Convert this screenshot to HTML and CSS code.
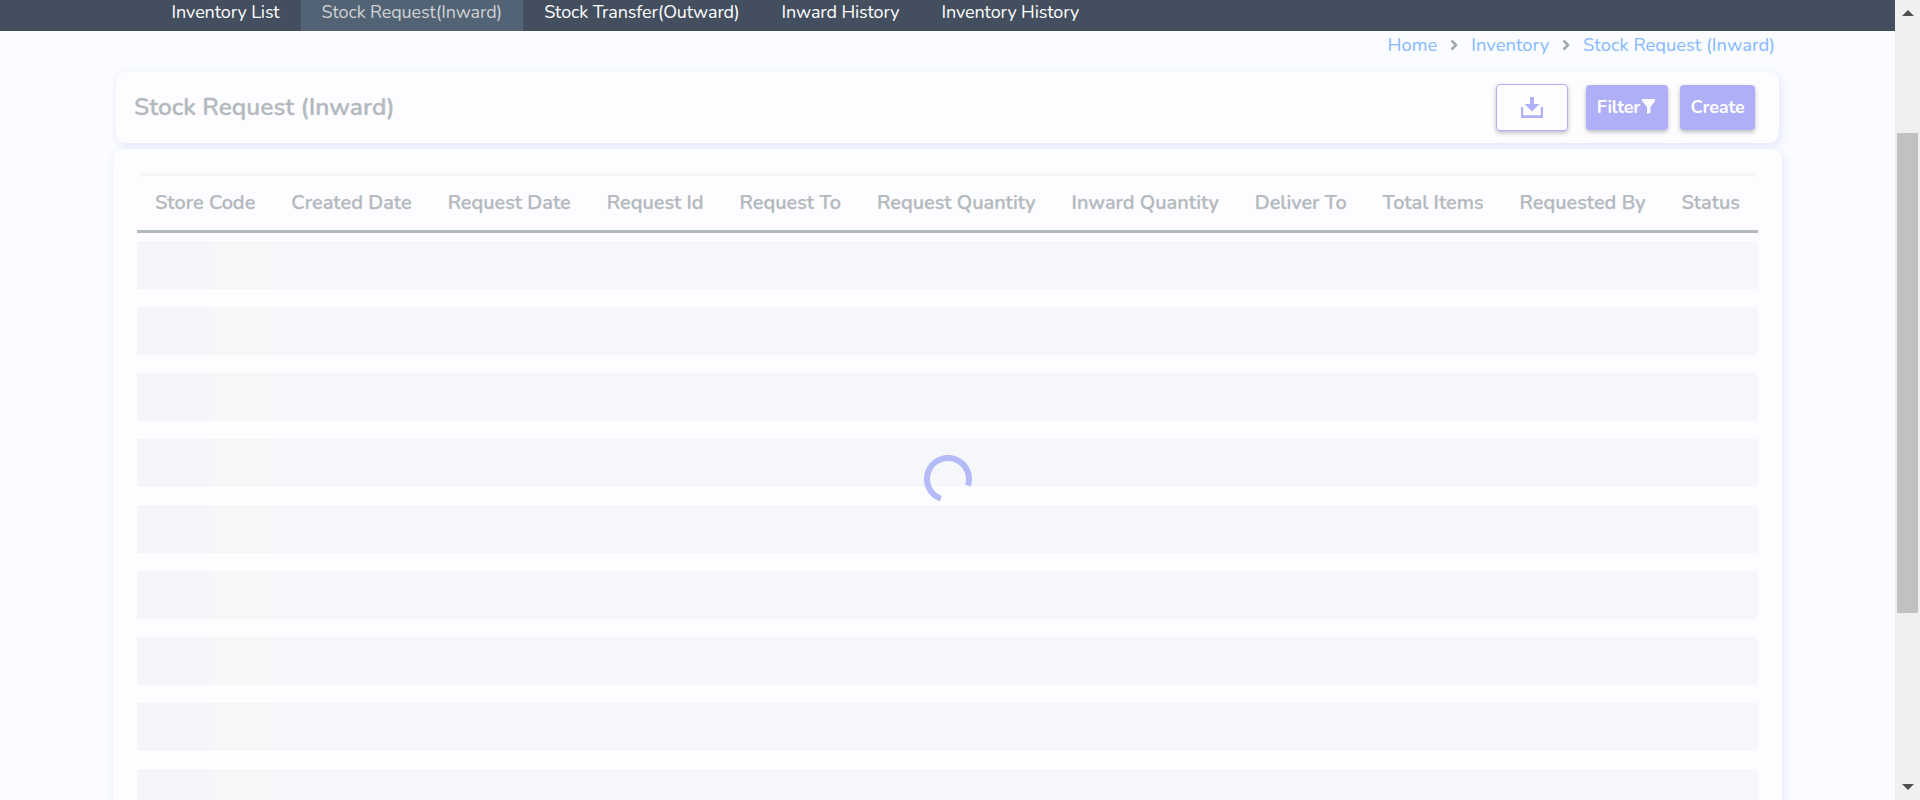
FILE: index.html
```
<!DOCTYPE html>
<html lang="en">
<head>
<meta charset="utf-8">
<title>Stock Request (Inward)</title>
<link rel="stylesheet" href="styles.css">
</head>
<body>
<div class="app">
  <div class="page">
    <nav class="nav">
      <a class="tab">Inventory List</a>
      <a class="tab active">Stock Request(Inward)</a>
      <a class="tab">Stock Transfer(Outward)</a>
      <a class="tab">Inward History</a>
      <a class="tab">Inventory History</a>
    </nav>
    <div class="crumbs">
      <a>Home</a>
      <svg class="chev" viewBox="0 0 8 12"><path d="M1.5 1.5 6 6 1.5 10.5"/></svg>
      <a>Inventory</a>
      <svg class="chev" viewBox="0 0 8 12"><path d="M1.5 1.5 6 6 1.5 10.5"/></svg>
      <a>Stock Request (Inward)</a>
    </div>
    <header class="card heading">
      <h1 class="title">Stock Request (Inward)</h1>
      <button class="btn download"><svg class="dl" viewBox="0 0 22 21"><path d="M9 0h4v7h5.5L11 14.5 3.500 7H9z"/><path d="M0 10h2.200v8.300h17.600V10H22v11H0z"/></svg></button>
      <button class="btn filter">Filter<svg class="funnel" viewBox="0 0 13 15"><path d="M0 0h13v2L8.500 8v5.500L5 15V8L0 2z"/></svg></button>
      <button class="btn create">Create</button>
    </header>
    <main class="card body">
      <div class="thead">
        <span>Store Code</span><span>Created Date</span><span>Request Date</span><span>Request Id</span><span>Request To</span><span>Request Quantity</span><span>Inward Quantity</span><span>Deliver To</span><span>Total Items</span><span>Requested By</span><span>Status</span>
      </div>
      <div class="rows">
        <div class="row"></div><div class="row"></div><div class="row"></div>
        <div class="row"></div><div class="row"></div><div class="row"></div>
        <div class="row"></div><div class="row"></div><div class="row"></div>
      </div>
    </main>
    <svg class="spinner" viewBox="-24 -24 48 48"><path d="M-7.18 19.73A21 21 0 1 1 19.97 6.49"/></svg>
  </div>
  <div class="scrollbar">
    <svg class="arrow" viewBox="0 0 12 6"><path d="M6 0l6 6H0z"/></svg>
    <div class="thumb"></div>
    <svg class="arrow" viewBox="0 0 12 6"><path d="M0 0h12L6 6z"/></svg>
  </div>
</div>
</body>
</html>
```
FILE: styles.css
```
* { box-sizing: border-box; }
body { margin: 0; overflow: hidden; font-family: Nunito, Lato, "Open Sans", sans-serif; }
.app { display: flex; width: 1920px; height: 800px; overflow: hidden; }
.page { position: relative; width: 1895px; height: 800px; overflow: hidden; background: #fafcff; }

.nav { display: flex; height: 31px; padding-left: 150.6px; background: #434e5e; }
.tab { height: 31px; padding: 0 21px; font-size: 18px; letter-spacing: -0.12px; line-height: 24px; color: #fff; white-space: nowrap; }
.tab.active { background: #526375; color: #cfd1d3; }

.crumbs { display: flex; justify-content: flex-end; align-items: center; height: 28px; padding-right: 120px; font-size: 18.4px; line-height: 26px; color: #85b8ff; white-space: nowrap; }
.crumbs a { padding-bottom: 1px; }
.chev { width: 8px; height: 12px; margin: 0 13px; fill: none; stroke: #a3a8ad; stroke-width: 2.6; }

.card { background: #fdfdff; border-radius: 10px; box-shadow: 2px 3px 10px rgba(115, 103, 255, 0.15); }
.heading { display: flex; align-items: center; width: 1663px; height: 71px; margin: 13px 0 0 116px; padding: 0 24px 0 18px; }
.title { margin: 0 auto 0 0; padding-bottom: 2px; font-size: 24.5px; font-weight: 600; line-height: 34px; color: #b3b9be; -webkit-text-stroke: 0.3px #b3b9be; }
.btn { display: flex; align-items: center; justify-content: center; height: 45px; padding: 0 0 2px; border: 0; border-radius: 4px; background: #aeaff7; color: #fdfdff; font: 700 18px Nunito, Lato, sans-serif; letter-spacing: -0.2px; box-shadow: 0 2px 4px rgba(0, 0, 0, 0.26); }
.download { width: 72px; height: 47px; margin-right: 18px; padding: 0; border: 1px solid #b1b2f9; background: #fdfdff; }
.dl { width: 22px; height: 21px; fill: #b1b2f9; }
.filter { width: 82px; margin-right: 12px; }
.funnel { width: 13px; height: 15px; margin: 0 2px 0 2px; fill: #fdfdff; }
.create { width: 75px; }

.body { position: relative; width: 1669px; height: 700px; margin: 6px 0 0 113px; padding: 24px 24px 0; }
.thead { display: flex; justify-content: space-around; height: 60px; border-top: 3px solid #f6f7f9; border-bottom: 3px solid #b1b8be; border-radius: 5px 5px 0 0; font-size: 19.9px; font-weight: 600; line-height: 53px; color: #b3b9be; white-space: nowrap; -webkit-text-stroke: 0.25px #b3b9be; }
.rows { display: flex; flex-direction: column; gap: 18px; padding-top: 8px; }
.row { flex: none; height: 48px; background: linear-gradient(90deg, #f5f6f8 5px, #f4f6fa 5px, #f4f6fa 72px, #f6f7f9 72px, #f6f7f9 139px, #f5f7fb 139px); }

.spinner { position: absolute; left: 924px; top: 455px; width: 48px; height: 48px; fill: none; stroke: #b5baf9; stroke-width: 6; }

.scrollbar { display: flex; flex-direction: column; align-items: center; width: 25px; height: 800px; padding: 10px 0; background: #f0f0f0; }
.arrow { width: 12px; height: 6px; fill: #505050; flex: none; }
.thumb { width: 21px; height: 480px; margin: 117px 0 auto; background: #c1c1c1; }
```
